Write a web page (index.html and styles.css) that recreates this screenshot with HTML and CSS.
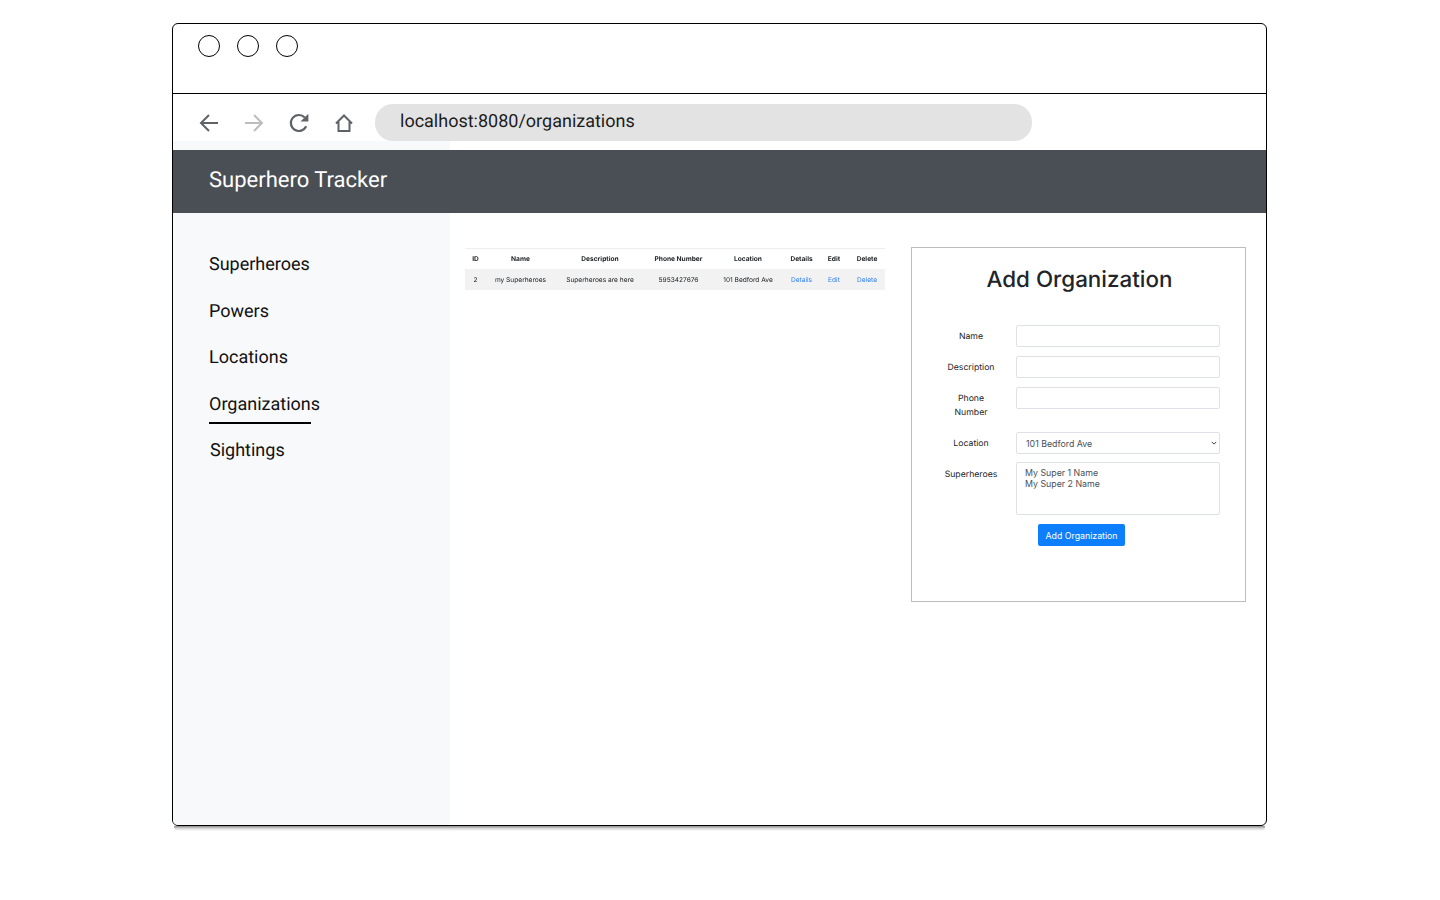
FILE: index.html
```html
<!DOCTYPE html>
<html lang="en">
<head>
    <meta charset="UTF-8">
    <meta name="viewport" content="width=device-width, initial-scale=1.0">
    <title>Superhero Tracker</title>
    <link rel="stylesheet" href="styles.css">
</head>
<body>
    <div class="window">
        <div class="titlebar">
            <span class="dot"></span>
            <span class="dot"></span>
            <span class="dot"></span>
        </div>

        <div class="toolbar">
            <svg class="tool-icon" width="20" height="20" viewBox="0 0 20 20">
                <path d="M19 10H2M10 2L2 10L10 18" fill="none" stroke="#5f6368" stroke-width="2"/>
            </svg>
            <svg class="tool-icon" width="20" height="20" viewBox="0 0 20 20">
                <path d="M1 10H18M10 2L18 10L10 18" fill="none" stroke="#bdbdbd" stroke-width="2"/>
            </svg>
            <svg class="tool-icon" width="20" height="20" viewBox="0 0 20 20">
                <path d="M17.2 13.2A8 8 0 1 1 15.8 4.6" fill="none" stroke="#5f6368" stroke-width="2.2"/>
                <path d="M11.5 8.6H19.4V0.8Z" fill="#5f6368"/>
            </svg>
            <svg class="tool-icon" width="20" height="20" viewBox="0 0 20 20">
                <path d="M2 10.5L10 2.5L18 10.5M4.5 9V18H15.5V9" fill="none" stroke="#5f6368" stroke-width="2"/>
            </svg>
            <div class="address">localhost:8080/organizations</div>
        </div>

        <div class="strip"><div class="strip-side"></div></div>

        <div class="navbar">Superhero Tracker</div>

        <div class="main">
            <nav class="sidebar">
                <a class="side-link" href="#">Superheroes</a>
                <a class="side-link" href="#">Powers</a>
                <a class="side-link" href="#">Locations</a>
                <a class="side-link active" href="#">Organizations</a>
                <a class="side-link last" href="#">Sightings</a>
            </nav>

            <div class="content">
                <table class="org-table">
                    <thead>
                        <tr>
                            <th class="col-id">ID</th>
                            <th class="col-name">Name</th>
                            <th class="col-desc">Description</th>
                            <th class="col-phone">Phone Number</th>
                            <th class="col-loc">Location</th>
                            <th class="col-details">Details</th>
                            <th class="col-edit">Edit</th>
                            <th class="col-delete">Delete</th>
                        </tr>
                    </thead>
                    <tbody>
                        <tr>
                            <td>2</td>
                            <td>my Superheroes</td>
                            <td>Superheroes are here</td>
                            <td>5953427676</td>
                            <td>101 Bedford Ave</td>
                            <td><a href="#">Details</a></td>
                            <td><a href="#">Edit</a></td>
                            <td><a href="#">Delete</a></td>
                        </tr>
                    </tbody>
                </table>

                <div class="form-card">
                    <h1 class="form-title">Add Organization</h1>
                    <form class="org-form">
                        <label class="form-label" for="name">Name</label>
                        <input class="form-control" id="name" type="text">

                        <label class="form-label" for="description">Description</label>
                        <input class="form-control" id="description" type="text">

                        <label class="form-label" for="phone">Phone Number</label>
                        <input class="form-control" id="phone" type="text">

                        <label class="form-label" for="location">Location</label>
                        <select class="form-control form-select" id="location">
                            <option>101 Bedford Ave</option>
                        </select>

                        <label class="form-label form-label-low" for="heroes">Superheroes</label>
                        <select class="form-control form-multi" id="heroes" multiple>
                            <option>My Super 1 Name</option>
                            <option>My Super 2 Name</option>
                        </select>

                        <button class="add-button" type="button">Add Organization</button>
                    </form>
                </div>
            </div>
        </div>
    </div>
    <div class="window-shadow"></div>
</body>
</html>
```

FILE: styles.css
```css
body {
    margin: 0;
    padding: 23px 0 0 172px;
    background-color: #ffffff;
    font-family: Inter, sans-serif;
    text-rendering: geometricPrecision;
}

.window {
    box-sizing: border-box;
    width: 1095px;
    height: 803px;
    display: flex;
    flex-direction: column;
    overflow: hidden;
    background-color: #ffffff;
    border: 1px solid #000000;
    border-radius: 6px;
}

/* soft shadow under the window */
.window-shadow {
    width: 1091px;
    height: 5px;
    margin-left: 2px;
    background-image: linear-gradient(#8a8a8a, #d8d8d8 50%, #ffffff);
    border-radius: 0 0 4px 4px;
}

.titlebar {
    box-sizing: border-box;
    height: 70px;
    flex: none;
    display: flex;
    gap: 17px;
    padding: 11px 0 0 25px;
    border-bottom: 1px solid #000000;
}

.dot {
    box-sizing: border-box;
    width: 22px;
    height: 22px;
    border: 1px solid #000000;
    border-radius: 50%;
}

.toolbar {
    height: 47px;
    flex: none;
    display: flex;
    align-items: flex-start;
    padding-left: 26px;
}

.tool-icon {
    flex: none;
    margin: 19px 25px 0 0;
}

.address {
    box-sizing: border-box;
    width: 657px;
    height: 37px;
    margin: 10px 0 0 -4px;
    padding: 0 0 3px 25px;
    display: flex;
    align-items: center;
    background-color: #e3e3e3;
    border-radius: 18px;
    font-family: Roboto, sans-serif;
    font-size: 18px;
    color: #1c1c1c;
}

.strip {
    height: 9px;
    flex: none;
}

.strip-side {
    width: 277px;
    height: 100%;
    background-color: #f8f9fa;
}

.navbar {
    box-sizing: border-box;
    height: 63px;
    flex: none;
    padding: 0 0 2px 36px;
    display: flex;
    align-items: center;
    background-color: #4a4f55;
    font-family: Roboto, sans-serif;
    font-size: 22px;
    color: #ffffff;
}

.main {
    flex: 1;
    display: flex;
    min-height: 0;
}

.sidebar {
    box-sizing: border-box;
    width: 277px;
    flex: none;
    display: flex;
    flex-direction: column;
    align-items: flex-start;
    padding: 41px 0 0 36px;
    background-color: #f8f9fa;
}

.side-link {
    height: 22px;
    margin-bottom: 24.6px;
    line-height: 22px;
    font-family: Roboto, sans-serif;
    font-size: 18px;
    color: #111111;
    text-decoration: none;
}

.side-link.active {
    width: 102px;
    height: 28px;
    margin-bottom: 16.6px;
    white-space: nowrap;
    border-bottom: 2px solid #000000;
}

.side-link.last {
    margin-left: 1px;
}

.content {
    flex: 1;
    display: flex;
    align-items: flex-start;
    padding: 34px 20px 0 15px;
}

.org-table {
    width: 420px;
    flex: none;
    margin: 1px 26px 0 0;
    border-collapse: collapse;
    table-layout: fixed;
    border-top: 1px solid #eeeeee;
    font-size: 6.6px;
    color: #212529;
    filter: blur(0.3px);
}

.org-table th {
    height: 20px;
    padding: 0;
    font-weight: 700;
    text-align: center;
}

.org-table td {
    height: 21px;
    padding: 0;
    text-align: center;
    background-color: #f2f2f2;
}

.org-table a {
    color: #2f80f6;
    text-decoration: none;
}

.col-id { width: 21px; }
.col-name { width: 69px; }
.col-desc { width: 90px; }
.col-phone { width: 67px; }
.col-loc { width: 72px; }
.col-details { width: 35px; }
.col-edit { width: 30px; }
.col-delete { width: 36px; }

.form-card {
    box-sizing: border-box;
    width: 335px;
    height: 355px;
    flex: none;
    padding: 18px 25px 0 14px;
    border: 1px solid #bdbdbd;
}

.form-title {
    margin: 0 0 31px;
    height: 28px;
    line-height: 28px;
    padding-left: 13px;
    text-align: center;
    font-size: 22.4px;
    font-weight: 500;
    color: #212529;
}

.org-form {
    display: grid;
    grid-template-columns: 90px 204px;
    grid-template-rows: 22px 22px 36px 21px 53px 22px;
    row-gap: 9px;
}

.form-label {
    padding: 5px 18px 0;
    text-align: center;
    font-size: 8.7px;
    line-height: 14px;
    color: #212529;
}

.form-label-low {
    padding-top: 6px;
}

.form-control {
    box-sizing: border-box;
    width: 204px;
    height: 22px;
    margin: 0;
    padding: 0 9px;
    background-color: #ffffff;
    border: 1px solid #dee2e6;
    border-radius: 2px;
    font-family: Inter, sans-serif;
    font-size: 8.8px;
    color: #495057;
}

.form-select {
    appearance: none;
    background-image: url("data:image/svg+xml,%3Csvg xmlns='http://www.w3.org/2000/svg' viewBox='0 0 16 16'%3E%3Cpath fill='none' stroke='%23343a40' stroke-width='2.6' d='M2 5l6 6 6-6'/%3E%3C/svg%3E");
    background-repeat: no-repeat;
    background-position: right 2px center;
    background-size: 6px 6px;
}

.form-multi {
    height: 53px;
    padding: 4px 8px;
    overflow: hidden;
    line-height: 11px;
}

.form-multi option {
    padding: 0;
    min-height: 11px;
}

.add-button {
    grid-column: 2;
    justify-self: start;
    width: 87px;
    height: 22px;
    margin-left: 22px;
    padding: 0;
    background-color: #0d7efc;
    border: none;
    border-radius: 2px;
    font-family: Inter, sans-serif;
    font-size: 8.8px;
    color: #ffffff;
    cursor: pointer;
}
```
